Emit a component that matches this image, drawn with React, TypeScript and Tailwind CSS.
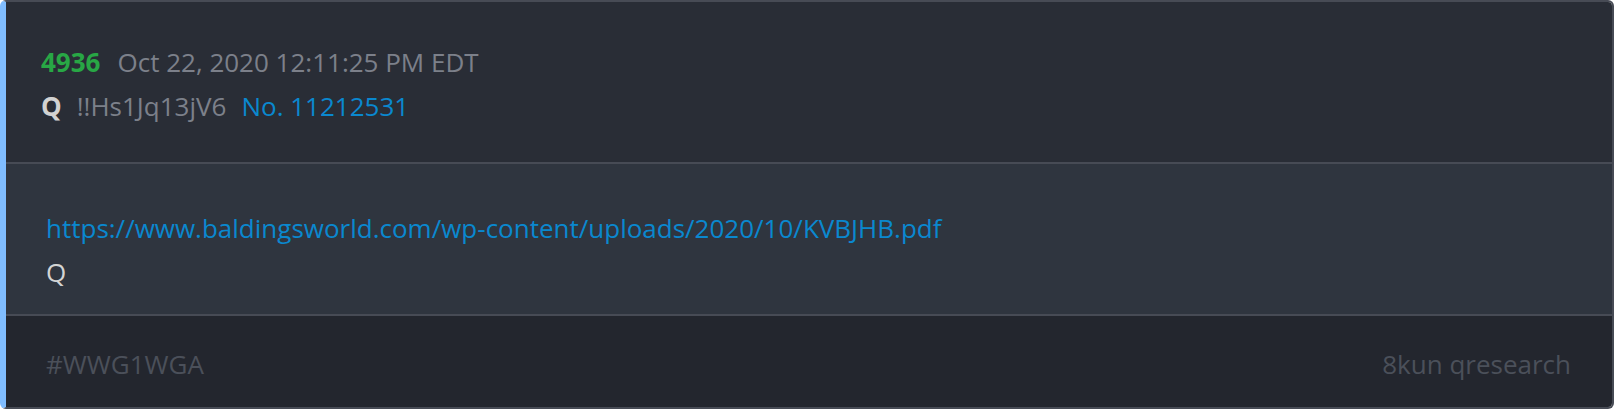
export default function App() {
  return (
    <div className="w-full bg-white" style={{ fontFamily: '"Open Sans", "Noto Sans", sans-serif' }}>
      <article className="h-[409px] flex flex-col rounded-[6px] overflow-hidden border-2 border-[#474b55] border-l-[6px] border-l-[#80bdff] text-[26px] leading-[36px]">
        <header className="h-[160px] shrink-0 bg-[#292d36] pl-[35px] pt-[42px] flex flex-col gap-[8px]">
          <div className="flex items-baseline gap-[17px]">
            <span className="font-bold text-[#28a745]">4936</span>
            <span className="text-[#7c808a]">Oct 22, 2020 12:11:25 PM EDT</span>
          </div>
          <div className="flex items-baseline gap-[15px]">
            <span className="font-bold text-[#d2d2d2]">Q</span>
            <span className="text-[#7c808a]">!!Hs1Jq13jV6</span>
            <span className="text-[#0a88cf]">No. 11212531</span>
          </div>
        </header>
        <section className="h-[154px] shrink-0 bg-[#2f353f] border-y-2 border-[#474b55] pl-[40px] pt-[46px] flex flex-col gap-[8px]">
          <a className="text-[#0a88cf]" href="#">
            https://www.baldingsworld.com/wp-content/uploads/2020/10/KVBJHB.pdf
          </a>
          <p className="text-[#d4d4d4]">Q</p>
        </section>
        <footer className="flex-1 bg-[#23262e] pl-[40px] pr-[41px] pt-[30px] flex justify-between text-[#4b505a]">
          <span>#WWG1WGA</span>
          <span>8kun qresearch</span>
        </footer>
      </article>
    </div>
  );
}
